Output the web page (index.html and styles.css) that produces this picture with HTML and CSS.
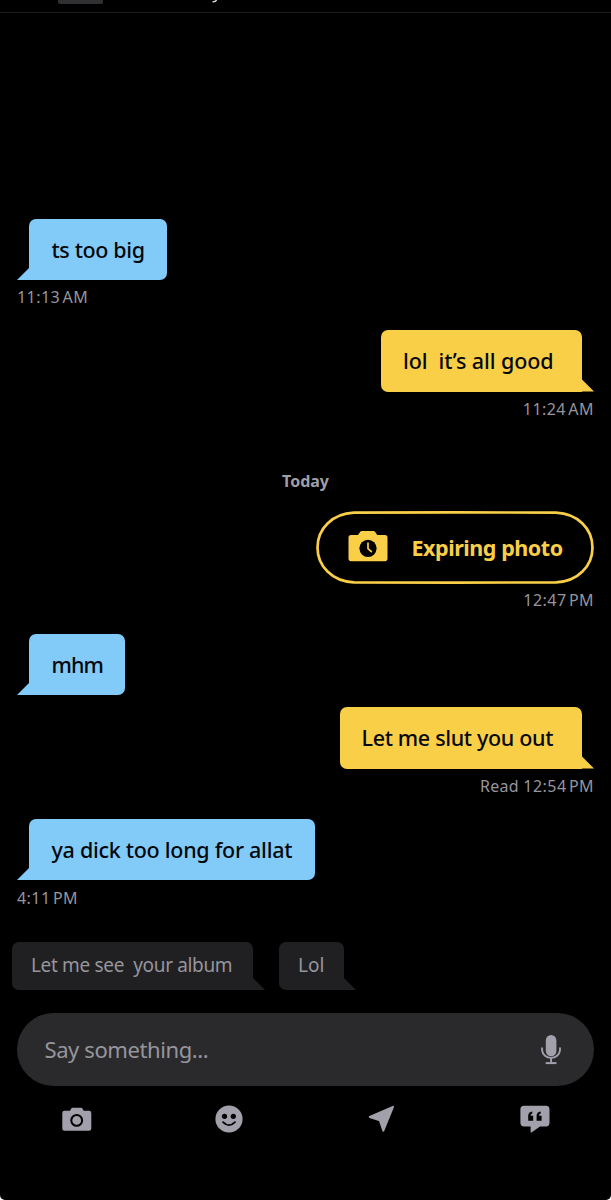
FILE: index.html
```html
<!DOCTYPE html>
<html lang="en">
<head>
<meta charset="utf-8">
<title>Chat</title>
<link rel="stylesheet" href="styles.css">
</head>
<body>
<div class="backdrop">
<div class="app">
  <header class="topbar"><div class="avatar"></div><svg class="name-tail" width="6" height="3" viewBox="0 0 6 3"><path d="M4.6 0Q3.6 2 .6 1.8" fill="none" stroke="#ddd" stroke-width="1.4"/></svg></header>
  <main class="thread">
    <div class="bubble in first"><span>ts too big</span></div>
    <time class="stamp"><span>11:13 AM</span></time>
    <div class="bubble out reply"><span>lol&nbsp; it’s all good</span></div>
    <time class="stamp right"><span>11:24 AM</span></time>
    <div class="day"><span>Today</span></div>
    <div class="photo">
      <svg class="outline" width="278" height="73" viewBox="0 0 278 73"><path d="M38 1.6C60 1.3 218 1.3 240 1.6C262 2.5 276.5 18 276.5 36.5S262 70.5 240 71.4C218 71.7 60 71.7 38 71.4C16 70.5 1.5 55 1.5 36.5S16 2.5 38 1.6Z" fill="none" stroke="#facf48" stroke-width="2.7"/></svg>
      <svg class="photo-icon" width="40" height="32" viewBox="0 0 40 32"><path d="M3 5H10L12.3 1.7Q12.8 1 13.8 1H25.5Q26.5 1 27 1.7L29.3 5H37Q39.5 5 39.5 7.5V28.5Q39.5 31.3 37 31.3H3Q.5 31.3 .5 28.5V7.5Q.5 5 3 5Z" fill="#facf48"/><circle cx="20" cy="18.3" r="8.6" fill="#000"/><path d="M20 12.5V18.7L23.8 22" fill="none" stroke="#facf48" stroke-width="1.7"/></svg>
      <span>Expiring photo</span>
    </div>
    <time class="stamp right raised"><span>12:47 PM</span></time>
    <div class="bubble in short"><span>mhm</span></div>
    <div class="bubble out second"><span>Let me slut you out</span></div>
    <time class="stamp right"><span class="read">Read </span><span>12:54 PM</span></time>
    <div class="bubble in last"><span>ya dick too long for allat</span></div>
    <time class="stamp final"><span>4:11 PM</span></time>
  </main>
  <section class="suggestions">
    <div class="chip album"><span>Let me see&nbsp; your album</span></div>
    <div class="chip lol"><span>Lol</span></div>
  </section>
  <div class="composer">
    <span>Say something...</span>
    <svg width="20" height="30" viewBox="0 0 20 30"><rect x="4.8" y="0" width="10.6" height="21.2" rx="5.3" fill="#a1a0ab"/><path d="M1.1 12.5V15.4A9 8.4 0 0 0 19 15.4V12.5M10.1 23.8V28" fill="none" stroke="#a1a0ab" stroke-width="1.9"/><path d="M4.7 28.1H15.5" stroke="#a1a0ab" stroke-width="2"/></svg>
  </div>
  <nav class="tools">
    <svg width="30" height="24" viewBox="0 0 30 24"><path d="M2.5 3.8H8L9.3 1.6Q9.8 .8 10.7 .8H19Q20 .8 20.4 1.6L21.7 3.8H27Q29.3 3.8 29.3 6V21.5Q29.3 23.7 27 23.7H2.5Q.3 23.7 .3 21.5V6Q.3 3.8 2.5 3.8Z" fill="#a1a0ab"/><circle cx="14.7" cy="13.4" r="5.4" fill="none" stroke="#000" stroke-width="2"/></svg>
    <svg width="28" height="28" viewBox="0 0 28 28"><circle cx="14" cy="14" r="13.6" fill="#a1a0ab"/><circle cx="9.5" cy="11.3" r="2.6"/><circle cx="18.3" cy="11.3" r="2.6"/><path d="M8 17.2Q14 23.2 20 17.2" fill="none" stroke="#000" stroke-width="1.8" stroke-linecap="round"/></svg>
    <svg width="27" height="28" viewBox="0 0 27 28"><path d="M25 1.8L1.8 12L11.8 15.2L15.3 25.7Z" fill="#a1a0ab" stroke="#a1a0ab" stroke-width="2" stroke-linejoin="round"/></svg>
    <svg width="30" height="28" viewBox="0 0 30 28"><path d="M4 .7H26Q29.5 .7 29.5 4.2V17.8Q29.5 21.4 26 21.4H20L11.5 27.4Q10.6 27.8 10.6 26.6V21.4H4Q.4 21.4 .4 17.8V4.2Q.4 .7 4 .7Z" fill="#a1a0ab"/><path d="M8.2 15.8V11Q8.2 7.1 12.3 6.6V8.4Q10.6 8.9 10.6 10.7H13.2V15.8ZM16.6 15.8V11Q16.6 7.1 20.7 6.6V8.4Q19 8.9 19 10.7H21.6V15.8Z"/></svg>
  </nav>
</div>
</div>
</body>
</html>
```
FILE: styles.css
```css
* { box-sizing: border-box; }
body { margin: 0; font-family: "Noto Sans", "Open Sans", sans-serif; font-size: 22px; color: #05080c; }
.backdrop { background: #fff; width: 611px; height: 1200px; }
.app { height: 1200px; background: #000; border-radius: 0 0 5px 5px; display: flex; flex-direction: column; }
.topbar { height: 13px; flex: none; border-bottom: 1px solid #1c1c1c; display: flex; align-items: flex-start; padding-left: 58px; }
.avatar { width: 45px; height: 4px; background: #303032; border-radius: 0 0 2px 2px; }
.name-tail { margin-left: 109px; }
span { white-space: pre; }

.thread { height: 929px; flex: none; display: flex; flex-direction: column; align-items: flex-start; padding: 205.5px 17px 0; }
.bubble { position: relative; height: 61.5px; flex: none; display: flex; align-items: center; font-size: 21.5px; font-weight: 500; }
.in { background: #82cbf8; border-radius: 7px 7px 7px 0; margin-left: 12px; padding-left: 22.5px; }
.out { background: #facf48; border-radius: 7px 7px 0 7px; align-self: flex-end; margin-right: 12px; padding-left: 22px; }
.in::before, .out::after, .chip::after { content: ""; position: absolute; bottom: 0; width: 12.5px; height: 12.5px; background: inherit; }
.in::before { left: -12px; clip-path: polygon(100% 0, 100% 100%, 0 100%); }
.out::after, .chip::after { right: -12px; clip-path: polygon(0 0, 100% 100%, 0 100%); }
.first { width: 137.5px; letter-spacing: -.37px; }
.reply { width: 201px; margin-top: 16px; letter-spacing: -.1px; }
.short { width: 96px; margin-top: 17px; letter-spacing: -.9px; }
.second { width: 242.5px; margin-top: 12px; letter-spacing: -.33px; }
.last { width: 286px; margin-top: 16px; letter-spacing: -.28px; }

.stamp { height: 34px; flex: none; font-size: 16px; line-height: 34px; color: #96959c; letter-spacing: .45px; word-spacing: -2.2px; }
.right { align-self: flex-end; }
.raised { margin-top: -1px; }
.final { margin-top: 1px; }
.read { word-spacing: 0; letter-spacing: .3px; }
.day { align-self: center; margin-top: 44px; height: 41px; line-height: 22px; font-size: 16px; font-weight: 700; color: #a09fa8; }
.photo { align-self: flex-end; position: relative; width: 278px; height: 73px; flex: none; display: flex; align-items: center; padding-left: 32px; color: #facf48; font-size: 21.5px; font-weight: 700; letter-spacing: -.45px; }
.outline { position: absolute; inset: 0; }
.photo-icon { margin-right: 23.5px; margin-top: -2px; }

.suggestions { height: 48px; flex: none; display: flex; gap: 26px; padding-left: 12px; color: #96959c; font-size: 19px; }
.chip { position: relative; height: 48px; background: #202022; border-radius: 7px 7px 0 7px; display: flex; align-items: center; padding: 0 0 2px 19px; }
.album { width: 241px; letter-spacing: -.34px; }
.lol { width: 65px; }
.composer { height: 73.5px; flex: none; margin: 22.5px 17px 0; border-radius: 37px; background: #2a2a2c; color: #96959c; display: flex; align-items: center; justify-content: space-between; padding: 0 33px 1px 27.5px; letter-spacing: -.4px; }
.composer svg { margin-top: 2px; }
.tools { display: flex; align-items: center; justify-content: space-between; height: 28px; margin-top: 19px; padding: 0 61px 0 61.5px; }
.tools svg:nth-child(2), .tools svg:nth-child(3) { margin-left: -1px; margin-right: 1px; }
```
